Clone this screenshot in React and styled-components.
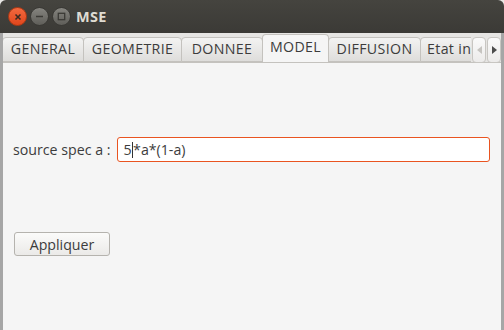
import styled, { createGlobalStyle } from "styled-components";

const Global = createGlobalStyle`
  html, body {
    margin: 0;
    padding: 0;
    background: #e9e8e6;
  }
  body {
    font-family: "Open Sans", "DejaVu Sans", sans-serif;
  }
`;

const Window = styled.div`
  width: 504px;
  height: 330px;
  display: flex;
  flex-direction: column;
  overflow: hidden;
  border-top-left-radius: 6px;
  border-top-right-radius: 6px;
`;

const TitleBar = styled.div`
  height: 33px;
  flex: none;
  background: linear-gradient(#45443f, #3b3a36);
  display: flex;
  align-items: center;
  padding-left: 8px;
  gap: 2px;
`;

const WinButton = styled.div`
  width: 17px;
  height: 17px;
  border-radius: 50%;
  background: ${(p) => (p.$close ? "linear-gradient(#f2693f, #e0461c)" : "linear-gradient(#85847f, #5f5e59)")};
  border: 1px solid ${(p) => (p.$close ? "#b23a14" : "#3a3935")};
  display: flex;
  align-items: center;
  justify-content: center;
  margin-right: 1px;
`;

const Title = styled.div`
  margin-left: 2px;
  color: #dfdbd2;
  font-weight: bold;
  font-size: 14.5px;
  letter-spacing: 0.3px;
`;

const Body = styled.div`
  flex: 1;
  display: flex;
  flex-direction: column;
  background: #f5f5f5;
  border-left: 3px solid #a6a6a6;
  border-right: 3px solid #a6a6a6;
`;

const TabBar = styled.div`
  height: 29px;
  flex: none;
  display: flex;
  align-items: flex-end;
  background: #e6e5e3;
  border-bottom: 1px solid #c4c2be;
`;

const Tabs = styled.div`
  flex: 1;
  display: flex;
  align-items: flex-end;
  overflow: hidden;
  height: 100%;
`;

const Tab = styled.div`
  flex: none;
  width: ${(p) => p.$w}px;
  height: ${(p) => (p.$active ? "29px" : "25px")};
  margin-bottom: ${(p) => (p.$active ? "-1px" : "0")};
  box-sizing: border-box;
  padding-left: ${(p) => (p.$left ? "6px" : "0")};
  padding-bottom: ${(p) => (p.$active ? "5px" : "2px")};
  display: flex;
  align-items: center;
  justify-content: ${(p) => (p.$left ? "flex-start" : "center")};
  font-size: 14.2px;
  letter-spacing: 0.35px;
  color: #3c3c3c;
  background: ${(p) => (p.$active ? "#f5f5f5" : "linear-gradient(#f3f3f2, #dedddb)")};
  border: 1px solid #c4c2be;
  border-bottom: ${(p) => (p.$active ? "none" : "1px solid #c4c2be")};
  border-radius: 4px 4px 0 0;
  margin-left: -1px;
  white-space: nowrap;
  overflow: hidden;
`;

const Arrows = styled.div`
  display: flex;
  height: 26px;
  align-self: flex-end;
  gap: 1px;
  margin-bottom: -1px;
  margin-left: 1px;
`;

const ArrowButton = styled.div`
  width: 14px;
  box-sizing: border-box;
  border: 1px solid #c8c6c2;
  border-radius: 4px;
  background: linear-gradient(#fafafa, #ecebea);
  display: flex;
  align-items: center;
  justify-content: center;
`;

const Content = styled.div`
  flex: 1;
  display: flex;
  flex-direction: column;
  padding: 74px 11px 0 10px;
`;

const Row = styled.div`
  display: flex;
  align-items: center;
  gap: 7px;
`;

const Label = styled.div`
  font-size: 14.2px;
  color: #3c3c3c;
`;

const Input = styled.div`
  flex: 1;
  height: 25px;
  box-sizing: border-box;
  border: 1px solid #e95420;
  border-radius: 3px;
  background: #fff;
  display: flex;
  align-items: center;
  padding-left: 5px;
  font-size: 14.2px;
  color: #3c3c3c;
`;

const Caret = styled.span`
  display: inline-block;
  width: 1px;
  height: 16px;
  background: #333;
  margin: 0 0 0 0.5px;
`;

const Button = styled.div`
  margin-top: 70px;
  width: 96px;
  height: 24px;
  box-sizing: border-box;
  border: 1px solid #b5b3ae;
  border-radius: 3px;
  background: linear-gradient(#fbfbfa, #ebeae8);
  display: flex;
  align-items: center;
  justify-content: center;
  font-size: 14.2px;
  color: #3c3c3c;
  margin-left: 1px;
`;

const tabs = [
  { name: "GENERAL", w: 82 },
  { name: "GEOMETRIE", w: 99 },
  { name: "DONNEE", w: 82 },
  { name: "MODEL", w: 67, active: true },
  { name: "DIFFUSION", w: 93 },
  { name: "Etat initial", w: 90, left: true },
];

export default function App() {
  return (
    <>
      <Global />
      <Window>
        <TitleBar>
          <WinButton $close>
            <svg width="8" height="8" viewBox="0 0 8 8">
              <path d="M1.5 1.5 L6.5 6.5 M6.5 1.5 L1.5 6.5" stroke="#3a2a22" strokeWidth="1.6" />
            </svg>
          </WinButton>
          <WinButton>
            <svg width="9" height="9" viewBox="0 0 9 9">
              <path d="M1 4.5 H8" stroke="#3b3a36" strokeWidth="1.6" />
            </svg>
          </WinButton>
          <WinButton>
            <svg width="9" height="9" viewBox="0 0 9 9">
              <rect x="1.3" y="1.3" width="6.4" height="6.4" fill="none" stroke="#3b3a36" strokeWidth="1.3" />
            </svg>
          </WinButton>
          <Title>MSE</Title>
        </TitleBar>
        <Body>
          <TabBar>
            <Tabs>
              {tabs.map((t) => (
                <Tab key={t.name} $active={t.active} $w={t.w} $left={t.left}>
                  {t.name}
                </Tab>
              ))}
            </Tabs>
            <Arrows>
              <ArrowButton>
                <svg width="5" height="8" viewBox="0 0 5 8">
                  <path d="M5 0 L0 4 L5 8 Z" fill="#c6c4c0" />
                </svg>
              </ArrowButton>
              <ArrowButton>
                <svg width="5" height="8" viewBox="0 0 5 8">
                  <path d="M0 0 L5 4 L0 8 Z" fill="#4c4c4c" />
                </svg>
              </ArrowButton>
            </Arrows>
          </TabBar>
          <Content>
            <Row>
              <Label>source spec a :</Label>
              <Input>
                5<Caret />*a*(1-a)
              </Input>
            </Row>
            <Button>Appliquer</Button>
          </Content>
        </Body>
      </Window>
    </>
  );
}
